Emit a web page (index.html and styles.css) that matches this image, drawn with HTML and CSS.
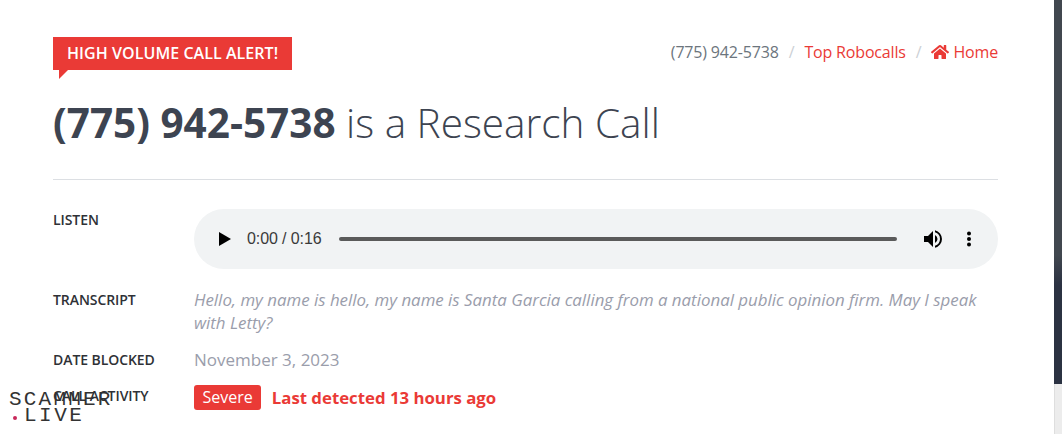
FILE: index.html
```html
<!DOCTYPE html>
<html lang="en">
<head>
<meta charset="utf-8">
<title>(775) 942-5738</title>
<link rel="stylesheet" href="styles.css">
</head>
<body>
<div class="page">
  <main class="content">
    <header class="topbar">
      <div class="alert">HIGH VOLUME CALL ALERT!</div>
      <nav class="crumbs">
        <span class="crumb-text">(775) 942-5738</span>
        <span class="sep">/</span>
        <a class="crumb-link">Top Robocalls</a>
        <span class="sep">/</span>
        <a class="crumb-link"><svg class="home" viewBox="0 0 576 512"><path fill="currentColor" d="M280.4 148.3L96 300.1V464a16 16 0 0 0 16 16l112.100-.3a16 16 0 0 0 15.900-16V368a16 16 0 0 1 16-16h64a16 16 0 0 1 16 16v95.600a16 16 0 0 0 16 16.100L464 480a16 16 0 0 0 16-16V300L295.700 148.300a12.200 12.200 0 0 0-15.300 0zM571.600 251.500L488 182.600V44.100a12 12 0 0 0-12-12h-56a12 12 0 0 0-12 12v72.600L318.500 43a48 48 0 0 0-61 0L4.300 251.500a12 12 0 0 0-1.600 16.900l25.500 31A12 12 0 0 0 45.200 301l235.200-193.700a12.200 12.200 0 0 1 15.300 0L530.900 301a12 12 0 0 0 16.900-1.600l25.500-31a12 12 0 0 0-1.700-16.900z"/></svg> Home</a>
      </nav>
    </header>
    <h1 class="title"><strong>(775) 942-5738</strong> is a Research Call</h1>
    <hr class="rule">
    <dl class="details">
      <dt class="label label-listen">LISTEN</dt>
      <dd class="value">
        <div class="player">
          <svg class="play" viewBox="0 0 12 14"><path d="M0 0l12 7-12 7z"/></svg>
          <span class="time">0:00 / 0:16</span>
          <span class="track"></span>
          <svg class="volume" viewBox="0 0 24 24"><path d="M3 9v6h4l5 5V4L7 9H3zm13.500 3A4.500 4.500 0 0 0 14 7.970v8.050A4.470 4.470 0 0 0 16.500 12zM14 3.230v2.060a7 7 0 0 1 0 13.420v2.060a9 9 0 0 0 0-17.540z"/></svg>
          <svg class="more" viewBox="0 0 4 16"><circle cx="2" cy="2.500" r="2"/><circle cx="2" cy="8" r="2"/><circle cx="2" cy="13.500" r="2"/></svg>
        </div>
      </dd>
      <dt class="label label-transcript">TRANSCRIPT</dt>
      <dd class="value transcript">Hello, my name is hello, my name is Santa Garcia calling from a national public opinion firm. May I speak with Letty?</dd>
      <dt class="label label-date">DATE BLOCKED</dt>
      <dd class="value date">November 3, 2023</dd>
      <dt class="label label-activity">CALL ACTIVITY</dt>
      <dd class="value activity"><span class="badge">Severe</span><span class="detected">Last detected 13 hours ago</span></dd>
    </dl>
  </main>
  <aside class="edge"><div class="edge-dark"></div><div class="edge-light"></div></aside>
</div>
<div class="watermark"><div>SCAMMER</div><div class="wm-second"><i class="wm-dot"></i>LIVE</div></div>
</body>
</html>
```
FILE: styles.css
```css
* { box-sizing: border-box; }
html, body { margin: 0; height: 434px; overflow: hidden; background: #fff; }
body { font-family: "Open Sans", sans-serif; color: #3d4451; }
.page { display: flex; width: 1062px; height: 434px; }
.content { width: 1054px; padding: 37px 56px 0 53px; }
.topbar { display: flex; justify-content: space-between; align-items: flex-start; height: 33px; }
.alert { position: relative; height: 33px; padding: 0 14px; background: #ea3a36; color: #fff; font-size: 16px; font-weight: 600; line-height: 33px; letter-spacing: 0.06px; }
.alert::after { content: ""; position: absolute; left: 6px; top: 33px; border-style: solid; border-width: 9px 9px 0 0; border-color: #ea3a36 transparent transparent transparent; }
.crumbs { display: flex; align-items: center; gap: 10px; font-size: 16px; line-height: 30px; letter-spacing: -0.17px; }
.crumb-text { color: #6c757d; }
.sep { color: #ccd0d5; }
.crumb-link { color: #ea3a36; }
.home { width: 18px; height: 16px; vertical-align: -2px; }
.title { margin: 26px 0 0; font-size: 40.5px; font-weight: 300; line-height: 54px; color: #3d4451; }
.title strong { font-weight: 700; }
.rule { margin: 29px 0 0; border: 0; border-top: 1px solid #dcdfe3; }
.details { display: grid; grid-template-columns: 141px 1fr; margin: 29px 0 0; }
.label { font-size: 14px; font-weight: 600; line-height: 20px; color: #2f3136; letter-spacing: -0.07px; }
.label-listen { padding-top: 1px; }
.label-transcript { padding-top: 2px; }
.label-date { padding-top: 3px; }
.label-activity { position: relative; z-index: 1; padding-top: 1px; }
.value { margin: 0; color: #9a9dab; font-size: 17px; line-height: 26px; }
.player { display: flex; align-items: center; height: 60px; margin-bottom: 19px; padding: 0 27px 0 25px; border-radius: 30px; background: #f1f3f4; color: #000; font: 14px/20px "Liberation Sans", sans-serif; }
.play { width: 12px; height: 14px; margin-right: 16px; }
.time { color: #3a3a3a; font-size: 16px; letter-spacing: -0.1px; }
.track { flex: 1; height: 4px; margin: 0 24px 0 17px; border-radius: 2px; background: #5a5a5a; }
.volume { width: 24px; height: 24px; margin-right: 22px; }
.more { width: 4px; height: 16px; }
.transcript { font-style: italic; font-size: 16.880px; line-height: 23px; margin-bottom: 13px; }
.date { margin-bottom: 12px; }
.activity { display: flex; align-items: center; gap: 10.500px; height: 25px; }
.badge { height: 25px; padding: 0 8.500px; border-radius: 3px; background: #ea3a36; color: #fff; font-size: 16px; line-height: 25px; }
.detected { color: #ea3a36; font-weight: 700; font-size: 16.800px; }
.edge { display: flex; flex-direction: column; width: 8px; }
.edge-dark { height: 384px; background: linear-gradient(#41474f 0, #41474f 255px, #2b3242 285px); }
.edge-light { flex: 1; background: #ececec; box-shadow: inset 1px 0 0 #dedede; }
.watermark { position: absolute; left: 9px; top: 390px; font: 21px/20px "Liberation Mono", monospace; letter-spacing: 2.200px; color: #333; }
.wm-second { display: flex; align-items: center; padding-left: 15px; position: relative; margin-top: -4px; letter-spacing: 2.500px; }
.wm-dot { position: absolute; left: 4px; top: 10px; width: 4px; height: 4px; border-radius: 50%; background: #c8285a; }
```
